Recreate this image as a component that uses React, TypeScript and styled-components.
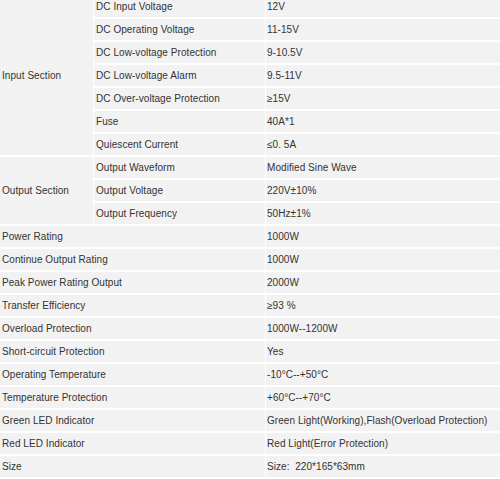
import React from 'react';
import styled, { createGlobalStyle } from 'styled-components';

const GlobalStyle = createGlobalStyle`
  html, body {
    margin: 0;
    padding: 0;
    background: #ffffff;
  }
  body {
    font-family: "Liberation Sans", Arial, sans-serif;
    overflow: hidden;
  }
`;

const SpecGrid = styled.div`
  display: grid;
  grid-template-columns: 93px 171px 1fr;
  grid-auto-rows: 21px;
  column-gap: 1px;
  row-gap: 2px;
  width: 500px;
  margin-top: -4px;
`;

const Cell = styled.div<{ $rows?: number; $cols?: number }>`
  display: flex;
  align-items: center;
  padding-left: 2px;
  background: #f2f2f2;
  color: #333333;
  font-size: 10px;
  letter-spacing: 0.06px;
  white-space: pre;
  overflow: hidden;
  grid-row: ${(p) => (p.$rows ? `span ${p.$rows}` : 'auto')};
  grid-column: ${(p) => (p.$cols ? `span ${p.$cols}` : 'auto')};
`;

const ValueCell = styled(Cell)`
  padding-left: 1px;
`;

type Row = [string, string];

const inputRows: Row[] = [
  ['DC Input Voltage', '12V'],
  ['DC Operating Voltage', '11-15V'],
  ['DC Low-voltage Protection', '9-10.5V'],
  ['DC Low-voltage Alarm', '9.5-11V'],
  ['DC Over-voltage Protection', '≥15V'],
  ['Fuse', '40A*1'],
  ['Quiescent Current', '≤0. 5A'],
];

const outputRows: Row[] = [
  ['Output Waveform', 'Modified Sine Wave'],
  ['Output Voltage', '220V±10%'],
  ['Output Frequency', '50Hz±1%'],
];

const plainRows: Row[] = [
  ['Power Rating', '1000W'],
  ['Continue Output Rating', '1000W'],
  ['Peak Power Rating Output', '2000W'],
  ['Transfer Efficiency', '≥93 %'],
  ['Overload Protection', '1000W--1200W'],
  ['Short-circuit Protection', 'Yes'],
  ['Operating Temperature', '-10°C--+50°C'],
  ['Temperature Protection', '+60°C--+70°C'],
  ['Green LED Indicator', 'Green Light(Working),Flash(Overload Protection)'],
  ['Red LED Indicator', 'Red Light(Error Protection)'],
  ['Size', 'Size:  220*165*63mm'],
];

const Section = ({ title, rows }: { title: string; rows: Row[] }) => (
  <>
    {rows.map(([label, value], i) => (
      <React.Fragment key={label}>
        {i === 0 && <Cell $rows={rows.length}>{title}</Cell>}
        <Cell>{label}</Cell>
        <ValueCell>{value}</ValueCell>
      </React.Fragment>
    ))}
  </>
);

export default function App() {
  return (
    <>
      <GlobalStyle />
      <SpecGrid>
        <Section title="Input Section" rows={inputRows} />
        <Section title="Output Section" rows={outputRows} />
        {plainRows.map(([label, value]) => (
          <React.Fragment key={label}>
            <Cell $cols={2}>{label}</Cell>
            <ValueCell>{value}</ValueCell>
          </React.Fragment>
        ))}
      </SpecGrid>
    </>
  );
}
